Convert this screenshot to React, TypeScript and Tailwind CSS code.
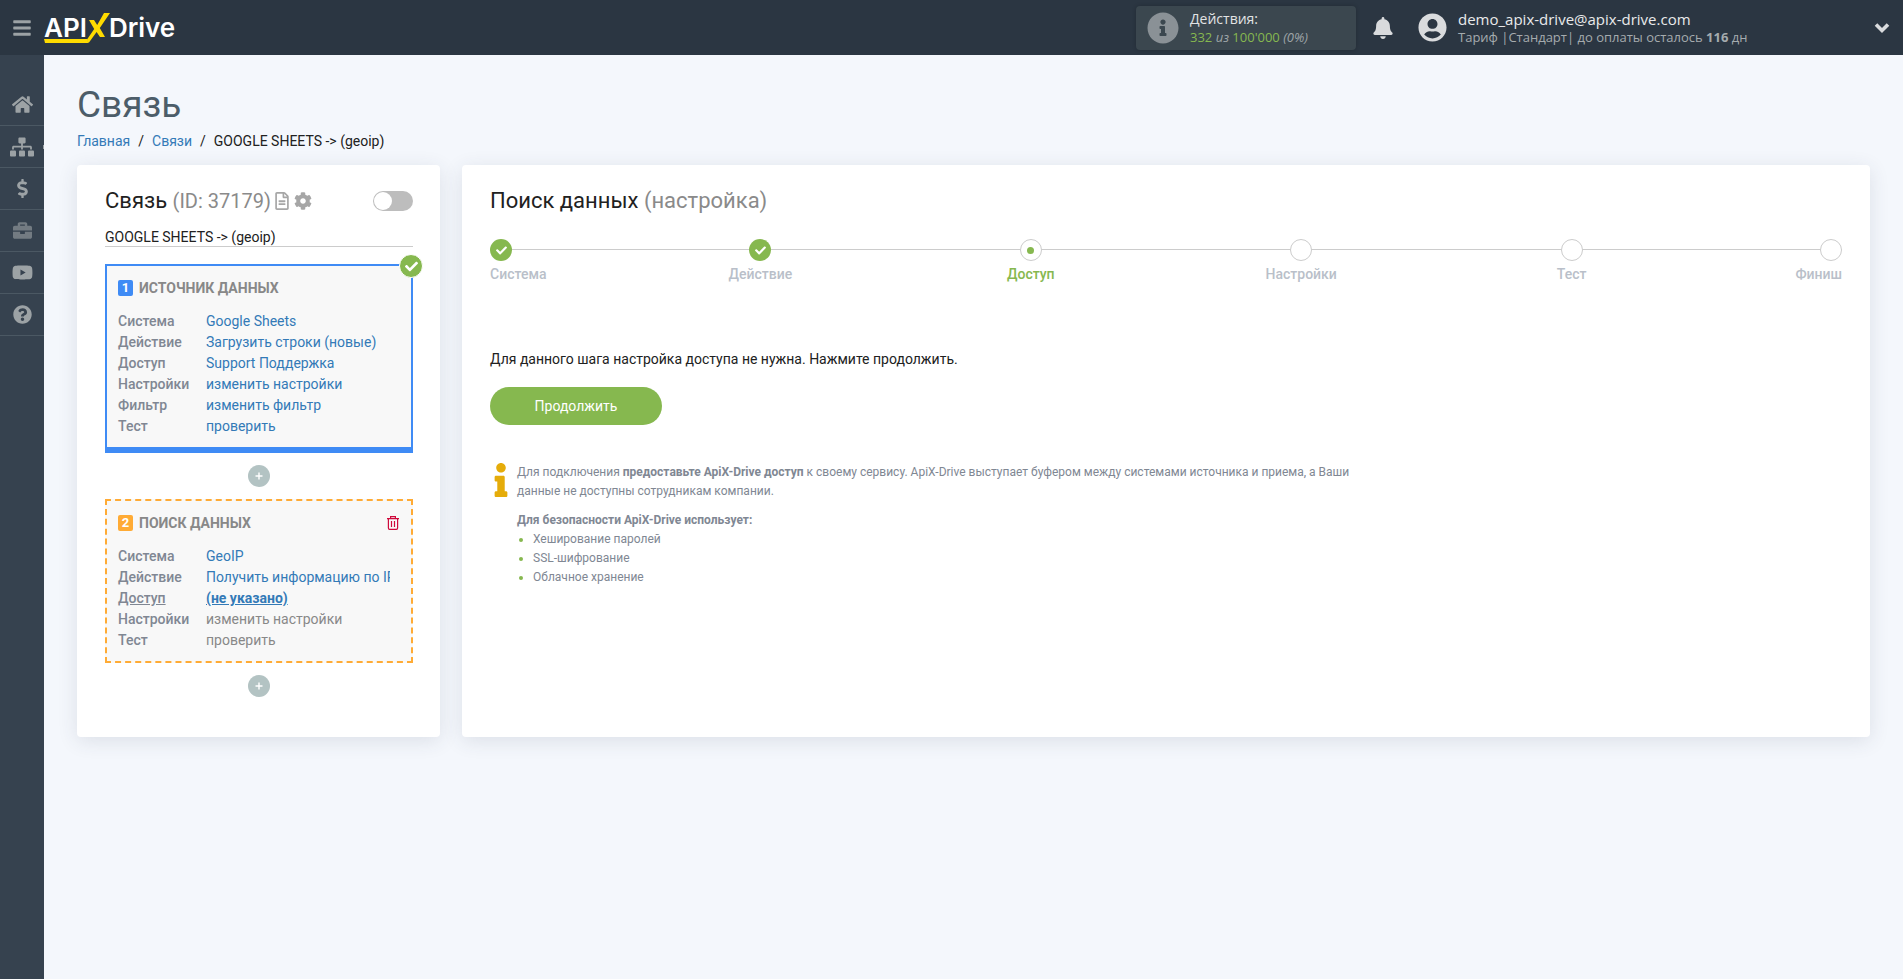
import { useState } from "react";
import {
  FaBars,
  FaBell,
  FaBriefcase,
  FaCheck,
  FaCog,
  FaDollarSign,
  FaHome,
  FaInfo,
  FaInfoCircle,
  FaQuestionCircle,
  FaRegFileAlt,
  FaSitemap,
  FaUserCircle,
  FaYoutube,
} from "react-icons/fa";

const nav = [
  { label: "Главная", icon: <FaHome size={21} /> },
  { label: "Связи", icon: <FaSitemap size={24} />, more: true },
  { label: "Оплата", icon: <FaDollarSign size={19} /> },
  { label: "Проекты", icon: <FaBriefcase size={19} />, dim: true },
  { label: "Видео", icon: <FaYoutube size={21} /> },
  { label: "Помощь", icon: <FaQuestionCircle size={19} /> },
];

type Row = { label: string; value: string; state?: "current" | "disabled" };

const sourceRows: Row[] = [
  { label: "Система", value: "Google Sheets" },
  { label: "Действие", value: "Загрузить строки (новые)" },
  { label: "Доступ", value: "Support Поддержка" },
  { label: "Настройки", value: "изменить настройки" },
  { label: "Фильтр", value: "изменить фильтр" },
  { label: "Тест", value: "проверить" },
];

const searchRows: Row[] = [
  { label: "Система", value: "GeoIP" },
  { label: "Действие", value: "Получить информацию по IP" },
  { label: "Доступ", value: "(не указано)", state: "current" },
  { label: "Настройки", value: "изменить настройки", state: "disabled" },
  { label: "Тест", value: "проверить", state: "disabled" },
];

const steps = [
  { label: "Система", state: "done" },
  { label: "Действие", state: "done" },
  { label: "Доступ", state: "active" },
  { label: "Настройки", state: "next" },
  { label: "Тест", state: "next" },
  { label: "Финиш", state: "next" },
];

const Logo = () => (
  <a href="#" className="relative flex items-center font-['Inter'] text-[26px] font-semibold leading-7 text-white">
    <span>API</span>
    <svg width="23" height="30" viewBox="0 0 23 30" fill="#fedb00" className="-mr-px">
      <path d="M2 7h5l3.2 5L17 0h6L12.8 15 18 24h-5l-3.4-5L2 29.5.2 30 0 26.5 7.2 16z" />
    </svg>
    <span>Drive</span>
    {/* underline below API */}
    <svg className="absolute left-0 top-[26px]" width="44" height="4" viewBox="0 0 44 4" fill="#fedb00">
      <path d="M0 0h43l1 4H1z" />
    </svg>
  </a>
);

const Header = () => (
  <header className="flex h-[55px] items-center bg-[#2b3642] text-[#d9dbdd]">
    <button type="button" aria-label="Меню" className="flex w-11 justify-center text-[#9ca2a5]">
      <FaBars size={20} />
    </button>
    <Logo />
    <div className="ml-auto flex items-center font-['Open_Sans']">
      <div className="flex h-11 w-[220px] items-center gap-[11px] rounded bg-[#3b474f] px-[11px] shadow-[0_0_4px_rgba(0,0,0,0.2)]">
        <FaInfoCircle size={32} className="shrink-0 text-[#8a9196]" />
        <div className="text-[13px] leading-[18px] text-[#9ea5a8]">
          <div className="text-sm leading-[18px] text-[#e2e3e4]">Действия:</div>
          <div>
            <span className="text-[#86b84f]">332</span> <i>из</i>{" "}
            <span className="text-[#86b84f]">100'000</span> <i>(0%)</i>
          </div>
        </div>
      </div>
      <button type="button" aria-label="Уведомления" className="ml-4">
        <FaBell size={22} />
      </button>
      <FaUserCircle size={29} className="ml-6" />
      <div className="ml-[11px] w-[400px] leading-[18px]">
        <div className="text-[15px] text-[#e9eaeb]">demo_apix-drive@apix-drive.com</div>
        <div className="text-[13px] text-[#a5abae]">
          Тариф |Стандарт| до оплаты осталось <b>116</b> дн
        </div>
      </div>
      <button type="button" aria-label="Профиль" className="mr-[13px] ml-4">
        <svg width="16" height="12" viewBox="0 0 16 12" fill="none" stroke="currentColor" strokeWidth="3.6">
          <path d="M2 2.5l6 6 6-6" />
        </svg>
      </button>
    </div>
  </header>
);

const Sidebar = () => (
  <nav className="w-11 shrink-0 bg-[#36424f] pt-[29px] text-[#9ca2a5]">
    {nav.map((item) => (
      <a
        key={item.label}
        href="#"
        aria-label={item.label}
        className="relative flex h-[42px] items-center justify-center border-b border-[#4b5863]"
      >
        <span className={item.dim ? "opacity-60" : ""}>{item.icon}</span>
        {item.more && <span className="absolute right-0 h-1 w-px bg-[#9ca2a5]" />}
      </a>
    ))}
  </nav>
);

const Rows = ({ rows }: { rows: Row[] }) => (
  <dl className="mr-[10px] grid grid-cols-[88px_1fr] leading-[21px]">
    {rows.map((row) => (
      <div key={row.label} className="contents">
        <dt className={`font-medium text-[#808793] ${row.state === "current" ? "underline" : ""}`}>{row.label}</dt>
        <dd className="overflow-hidden whitespace-nowrap">
          {row.state === "disabled" ? (
            <span className="text-[#888]">{row.value}</span>
          ) : (
            <a href="#" className={`text-[#337ab7] ${row.state === "current" ? "font-bold underline" : ""}`}>
              {row.value}
            </a>
          )}
        </dd>
      </div>
    ))}
  </dl>
);

const AddButton = () => (
  <button
    type="button"
    aria-label="Добавить блок"
    className="mx-auto my-3 flex size-[22px] items-center justify-center rounded-full bg-[#b3c3c3]"
  >
    <svg width="8" height="8" viewBox="0 0 8 8" stroke="#fff" strokeWidth="1.4">
      <path d="M4 0.5v7M0.5 4h7" />
    </svg>
  </button>
);

const ConnectionCard = () => {
  const [enabled, setEnabled] = useState(false);
  const [name, setName] = useState("GOOGLE SHEETS -> (geoip)");

  return (
    <section className="w-[363px] shrink-0 rounded bg-white pt-5 pr-[27px] pb-7 pl-7 shadow-[0_4px_20px_rgba(50,60,80,0.12)]">
      <div className="flex h-8 items-center">
        <h2 className="text-[22px] leading-8 text-[#212121]">
          Связь <span className="text-xl text-[#8a8a8a]">(ID: 37179)</span>
        </h2>
        <button type="button" aria-label="Журнал" className="ml-[2px] text-[#a6a6a6]">
          <FaRegFileAlt size={18} />
        </button>
        <button type="button" aria-label="Настройки связи" className="ml-[3px] text-[#a6a6a6]">
          <FaCog size={18} />
        </button>
        <input
          type="checkbox"
          aria-label="Включить связь"
          checked={enabled}
          onChange={(e) => setEnabled(e.target.checked)}
          className="ml-auto h-5 w-10 appearance-none rounded-full bg-[#bdbdbd] p-px before:block before:size-[18px] before:rounded-full before:bg-white checked:bg-[#86b84f] checked:before:translate-x-5"
        />
      </div>
      <input
        type="text"
        aria-label="Название связи"
        value={name}
        onChange={(e) => setName(e.target.value)}
        className="mt-[10px] h-5 w-full border-b border-[#ccc] text-[#212121] outline-none"
      />

      <div className="relative mt-[17px] border-2 border-b-[6px] border-[#3f8bf5] bg-[#f8f8f8] px-[11px] pt-3 pb-[10px]">
        <span className="absolute -top-3 -right-3 flex size-6 items-center justify-center rounded-full border border-white bg-[#86b84f] text-white">
          <FaCheck size={13} />
        </span>
        <div className="mb-[13px] flex items-center gap-[6px]">
          <span className="flex h-4 w-[15px] items-center justify-center rounded-xs bg-[#3f8bf5] text-[13px] font-bold text-white">1</span>
          <h3 className="font-bold leading-5 text-[#888]">ИСТОЧНИК ДАННЫХ</h3>
        </div>
        <Rows rows={sourceRows} />
      </div>
      <AddButton />

      <div className="border-2 border-dashed border-[#ffab35] bg-[#f8f8f8] px-[11px] pt-3 pb-[10px]">
        <div className="mb-[13px] flex items-center gap-[6px]">
          <span className="flex h-4 w-[15px] items-center justify-center rounded-xs bg-[#ffab35] text-[13px] font-bold text-white">2</span>
          <h3 className="font-bold leading-5 text-[#888]">ПОИСК ДАННЫХ</h3>
          <button type="button" aria-label="Удалить" className="mr-px ml-auto">
            <svg width="12" height="14" viewBox="0 0 12 14" fill="none" stroke="#cf0a3c" strokeWidth="1.2">
              <path d="M0 2.6h12M3.6 2.6V0.7h4.8v1.9M1.4 2.6v9.3q0 1.4 1.2 1.4h6.8q1.2 0 1.2-1.4V2.6M4.5 5v6M7.5 5v6" />
            </svg>
          </button>
        </div>
        <Rows rows={searchRows} />
      </div>
      <AddButton />
    </section>
  );
};

const Stepper = () => (
  <ol className="relative mt-[22px] flex">
    <li aria-hidden className="absolute top-[10px] h-px w-full bg-[#ccc]" />
    {steps.map((step) => (
      <li
        key={step.label}
        className="relative flex flex-2 flex-col items-center nth-[2]:flex-1 nth-[2]:items-start last:flex-1 last:items-end"
      >
        <span
          className={`flex size-[22px] items-center justify-center rounded-full ${
            step.state === "done" ? "bg-[#86b84f] text-white" : "border border-[#ccc] bg-white"
          }`}
        >
          {step.state === "done" && <FaCheck size={11} />}
          {step.state === "active" && <span className="size-[7px] rounded-full bg-[#86b84f]" />}
        </span>
        <span className={`mt-[3px] font-medium leading-5 ${step.state === "active" ? "text-[#86b84f]" : "text-[#b9bfc9]"}`}>
          {step.label}
        </span>
      </li>
    ))}
  </ol>
);

const SettingsCard = () => (
  <section className="min-w-0 flex-1 rounded bg-white px-7 pt-5 pb-7 shadow-[0_4px_20px_rgba(50,60,80,0.12)]">
    <h2 className="text-[22px] leading-8 text-[#212121]">
      Поиск данных <span className="text-[#8a8a8a]">(настройка)</span>
    </h2>
    <Stepper />
    <p className="mt-[65px] leading-5 text-[#212121]">Для данного шага настройка доступа не нужна. Нажмите продолжить.</p>
    <button type="button" className="mt-[18px] h-[38px] w-[172px] rounded-full bg-[#86b84f] text-white">
      Продолжить
    </button>
    <div className="mt-[38px] flex max-w-[880px] text-xs leading-[19px] text-[#808793]">
      <FaInfo size={34} className="-mr-px -ml-[6px] shrink-0 text-[#e5ac0a]" />
      <div>
        <p>
          Для подключения <b>предоставьте ApiX-Drive доступ</b> к своему сервису. ApiX-Drive выступает буфером между
          системами источника и приема, а Ваши данные не доступны сотрудникам компании.
        </p>
        <p className="mt-[10px] font-bold">Для безопасности ApiX-Drive использует:</p>
        <ul className="list-disc pl-4 marker:text-[#86b84f]">
          <li>Хеширование паролей</li>
          <li>SSL-шифрование</li>
          <li>Облачное хранение</li>
        </ul>
      </div>
    </div>
  </section>
);

const App = () => (
  <div className="flex min-h-screen flex-col bg-[#f4f7fc] font-['Roboto',sans-serif] text-sm">
    <Header />
    <div className="flex flex-1">
      <Sidebar />
      <main className="min-w-0 flex-1 px-[33px] pt-7 pb-7">
        <h1 className="text-[37px] leading-11 text-[#4c5d69]">Связь</h1>
        <nav aria-label="Навигация" className="mt-1 flex gap-2 leading-5 text-[#212121]">
          <a href="#" className="text-[#337ab7]">Главная</a>
          <span>/</span>
          <a href="#" className="text-[#337ab7]">Связи</a>
          <span>/</span>
          <span>{"GOOGLE SHEETS -> (geoip)"}</span>
        </nav>
        <div className="mt-[14px] flex gap-[22px]">
          <ConnectionCard />
          <SettingsCard />
        </div>
      </main>
    </div>
  </div>
);

export default App;
